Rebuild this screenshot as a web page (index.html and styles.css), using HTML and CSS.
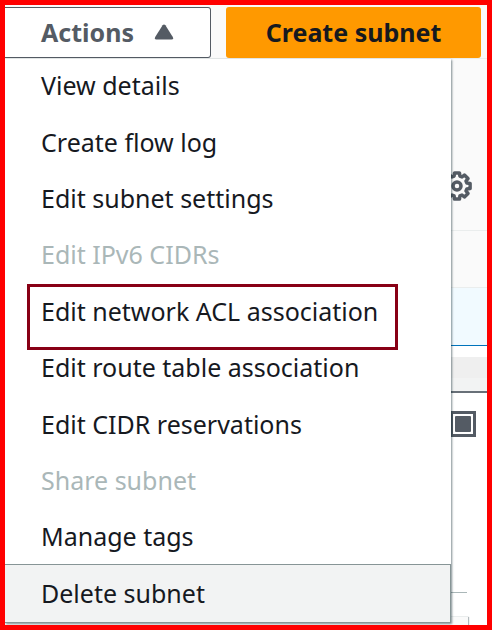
FILE: index.html
```
<!DOCTYPE html>
<html lang="en">
<head>
  <meta charset="UTF-8" />
  <meta name="viewport" content="width=device-width, initial-scale=1.0"/>
  <title>Subnets</title>
  <link rel="stylesheet" href="styles.css">
</head>
<body>
  <div class="page">
    <header class="toolbar">
      <button class="btn btn-actions" type="button" aria-expanded="true">
        Actions
        <svg class="caret" viewBox="0 0 20 16" aria-hidden="true"><path d="M8.6 1.2Q10 -.4 11.4 1.2L18.8 13Q19.8 15.5 17.6 15.5H2.4Q.2 15.5 1.2 13Z"/></svg>
      </button>
      <button class="btn btn-create" type="button">Create subnet</button>
    </header>

    <main class="content">
      <section class="filters">
        <button class="icon-btn" type="button" aria-label="Preferences">
          <svg class="gear" viewBox="0 0 30 30" aria-hidden="true">
            <path d="M12.5 1.900H17.500L17.900 5.100L20 6L22.400 4L26 7.600L24 10L24.900 12.100L28.100 12.500V17.500L24.900 17.900L24 20L26 22.400L22.400 26L20 24L17.900 24.900L17.500 28.100H12.500L12.100 24.900L10 24L7.600 26L4 22.400L6 20L5.100 17.900L1.900 17.500V12.500L5.100 12.100L6 10L4 7.600L7.600 4L10 6L12.100 5.100Z"/>
            <circle cx="15" cy="15" r="4"/>
          </svg>
        </button>
      </section>
      <div class="columns"></div>
      <div class="row-selected"></div>
      <div class="splitter"></div>
      <section class="details">
        <button class="icon-btn" type="button" aria-label="Full panel">
          <svg class="panel-icon" viewBox="0 0 26 26" aria-hidden="true">
            <rect class="outer" x="1.500" y="1.500" width="23" height="23"/>
            <rect class="inner" x="5" y="5" width="16" height="16" rx="1"/>
          </svg>
        </button>
        <div class="tab-line"></div>
        <div class="card"></div>
      </section>
    </main>

    <ul class="menu" role="menu">
      <li><button type="button" role="menuitem">View details</button></li>
      <li><button type="button" role="menuitem">Create flow log</button></li>
      <li><button type="button" role="menuitem">Edit subnet settings</button></li>
      <li><button type="button" role="menuitem" disabled>Edit IPv6 CIDRs</button></li>
      <li class="marked"><button type="button" role="menuitem">Edit network ACL association</button></li>
      <li><button type="button" role="menuitem">Edit route table association</button></li>
      <li><button type="button" role="menuitem">Edit CIDR reservations</button></li>
      <li><button type="button" role="menuitem" disabled>Share subnet</button></li>
      <li><button type="button" role="menuitem">Manage tags</button></li>
      <li class="active"><button type="button" role="menuitem">Delete subnet</button></li>
    </ul>
  </div>
</body>
</html>
```
FILE: styles.css
```
* {
  margin: 0;
  padding: 0;
  box-sizing: border-box;
}

body {
  font-family: "Noto Sans", "Open Sans", sans-serif;
  font-size: 25px;
  color: #16191f;
}

button {
  font: inherit;
  color: inherit;
  background: none;
  border: 0;
}

.page {
  position: relative;
  display: flex;
  flex-direction: column;
  min-height: 100vh;
  border: 5px solid #ff0000;
  background: #fff;
  overflow: hidden;
}

/* top buttons */
.toolbar {
  display: flex;
  gap: 15px;
  height: 54px;
  padding: 2px 6px 0 0;
  background: #fafafa;
  border-bottom: 1px solid #eaeded;
}

.btn {
  height: 51px;
  padding-bottom: 2px;
  font-weight: 700;
  border-radius: 3px;
}

.btn-actions {
  display: flex;
  align-items: center;
  gap: 20px;
  width: 206px;
  padding-left: 36px;
  color: #545b64;
  background: #fff;
  border: 1px solid #545b64;
  border-left: 0;
  border-radius: 0 3px 3px 0;
}

.caret {
  width: 20px;
  height: 16px;
  fill: #545b64;
}

.btn-create {
  flex: 1;
  background: #ff9900;
}

/* page behind the menu */
.content {
  display: flex;
  flex: 1;
  flex-direction: column;
}

.filters {
  display: flex;
  justify-content: flex-end;
  align-items: flex-end;
  height: 172px;
  padding: 0 15px 29px 0;
  background: #fafafa;
  border-bottom: 1px solid #eaeded;
}

.icon-btn {
  display: block;
}

.icon-btn svg {
  display: block;
  fill: none;
  stroke: #545b64;
}

.gear {
  width: 30px;
  height: 30px;
  stroke-width: 3.5;
  stroke-linejoin: round;
}

.columns {
  height: 57px;
  background: #fafafa;
  border-bottom: 1px solid #eaeded;
}

.row-selected {
  height: 58px;
  background: #f1faff;
  border-bottom: 1px solid #0073bb;
}

.splitter {
  height: 36px;
  margin-top: 11px;
  background: linear-gradient(#efefef 21px, #f2f3f3 21px);
  border-bottom: 2px solid #687078;
}

.details {
  display: flex;
  flex: 1;
  flex-direction: column;
  align-items: flex-end;
  padding: 18px 11px 0 0;
}

.panel-icon {
  width: 26px;
  height: 26px;
}

.panel-icon .outer {
  stroke-width: 3;
}

.panel-icon .inner {
  fill: #545b64;
  stroke: none;
}

.tab-line {
  align-self: stretch;
  height: 1px;
  margin: auto 9px 23px 0;
  background: #aab7b8;
}

.card {
  align-self: stretch;
  height: 9px;
  margin-right: 8px;
  background: #fafafa;
  border-top: 1px solid #eaeded;
  box-shadow: 1px 1px 1px rgba(0, 28, 36, 0.3);
}

/* dropdown menu */
.menu {
  position: absolute;
  top: 54px;
  bottom: 2px;
  left: 0;
  display: grid;
  grid-auto-rows: 1fr;
  width: 446px;
  background: #fff;
  box-shadow: 1px 1px 2px rgba(0, 28, 36, 0.5);
  list-style: none;
}

.menu li {
  position: relative;
  display: grid;
}

.menu button {
  padding: 0 36px 4px;
  text-align: left;
  white-space: nowrap;
}

.menu button:disabled {
  color: #aab7b8;
}

.menu .active {
  margin-top: -3px;
  background: #f2f3f3;
  border: 1px solid #879596;
  border-left: 0;
}

.menu .active button {
  padding-bottom: 0;
}

.marked::after {
  content: "";
  position: absolute;
  inset: -1px 53px -9px 22px;
  border: 3px solid #880015;
  pointer-events: none;
}
```
